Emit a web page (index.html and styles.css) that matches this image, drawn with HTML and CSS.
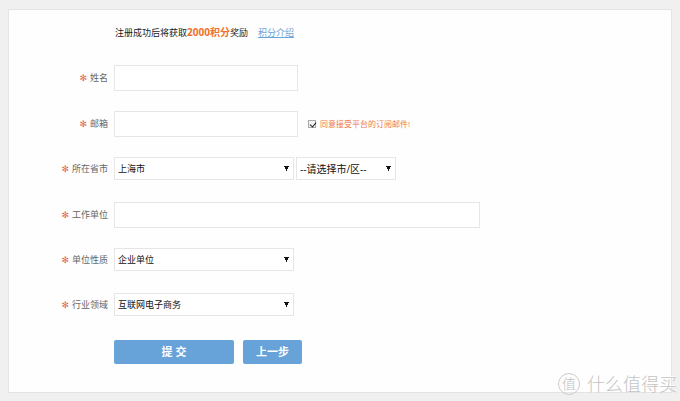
FILE: index.html
```
<!DOCTYPE html>
<html lang="zh-CN">
<head>
  <meta charset="utf-8">
  <title>注册</title>
  <link rel="stylesheet" href="styles.css">
</head>
<body>
  <form class="panel">
    <p class="notice">注册成功后将获取<strong>2000积分</strong>奖励<a href="#">积分介绍</a></p>

    <div class="row">
      <label class="label" for="name"><i>✻</i>姓名</label>
      <input type="text" id="name" class="text-input">
    </div>
    <div class="row">
      <label class="label" for="email"><i>✻</i>邮箱</label>
      <input type="text" id="email" class="text-input">
      <label class="subscribe"><input type="checkbox" checked><span>同意接受平台的订阅邮件!</span></label>
    </div>
    <div class="row row-select">
      <label class="label" for="province"><i>✻</i>所在省市</label>
      <select id="province" class="select"><option>上海市</option></select>
      <select class="select select-city" aria-label="市/区"><option>--请选择市/区--</option></select>
    </div>
    <div class="row">
      <label class="label" for="company"><i>✻</i>工作单位</label>
      <input type="text" id="company" class="text-input text-input-wide">
    </div>
    <div class="row row-select">
      <label class="label" for="nature"><i>✻</i>单位性质</label>
      <select id="nature" class="select"><option>企业单位</option></select>
    </div>
    <div class="row row-select">
      <label class="label" for="industry"><i>✻</i>行业领域</label>
      <select id="industry" class="select"><option>互联网电子商务</option></select>
    </div>

    <div class="actions">
      <button type="submit" class="btn btn-submit">提 交</button>
      <button type="button" class="btn">上一步</button>
    </div>
  </form>

  <div class="watermark"><span class="watermark-logo">值</span>什么值得买</div>
</body>
</html>
```
FILE: styles.css
```
* { box-sizing: border-box; }

body {
  margin: 0;
  padding: 9px 8px;
  background-color: #f0f0f0;
  color: #222;
  font-family: "Open Sans", "Noto Sans CJK SC", sans-serif;
  font-size: 9px;
  line-height: 14px;
}

.panel {
  padding: 15px 0 28px;
  background-color: #fefefe;
  border: 1px solid #e4e4e4;
}

.notice { margin: 0 0 25px 106px; }
.notice strong { color: #f0702c; font-size: 10px; }
.notice a { margin-left: 10px; color: #6ba3d6; }

/* Form rows */
.row {
  display: flex;
  align-items: center;
  height: 26px;
  margin-bottom: 20px;
}
.row-select { height: 23px; margin-bottom: 22px; }

.label {
  width: 99px;
  margin-right: 6px;
  color: #666;
  text-align: right;
}
.label i {
  margin-right: 3px;
  color: #e0605c;
  font-family: "DejaVu Sans", sans-serif;
  font-style: normal;
}

.text-input {
  width: 184px;
  height: 26px;
  padding: 0 4px;
  border: 1px solid #e6e6e6;
  background-color: #fff;
  font: inherit;
}
.text-input-wide { width: 366px; }

.select {
  width: 180px;
  height: 23px;
  margin-right: 2px;
  padding: 0 3px;
  border: 1px solid #e6e6e6;
  border-radius: 0;
  color: #111;
  font: inherit;
  appearance: none;
  /* small triangle arrow, two gradients meeting at the tip */
  background:
    linear-gradient(to bottom right, #111 50%, transparent 50%) right 4px center / 3px 6px no-repeat,
    linear-gradient(to bottom left, #111 50%, transparent 50%) right 6px center / 3px 6px no-repeat,
    #fff;
}
.select-city { width: 100px; font-size: 10px; }

.subscribe {
  display: flex;
  align-items: center;
  gap: 4px;
  margin-left: 10px;
  color: #ee7a48;
  font-size: 8px;
}
.subscribe input {
  position: relative;
  width: 8px;
  height: 8px;
  margin: 0;
  border: 1px solid #aaa;
  background-color: #f4f4f4;
  appearance: none;
}
.subscribe input:checked::after {
  content: "";
  position: absolute;
  top: 0;
  left: 2px;
  width: 3px;
  height: 5px;
  border: solid #222;
  border-width: 0 1px 1px 0;
  transform: rotate(40deg);
}

/* Buttons */
.actions {
  display: flex;
  gap: 9px;
  margin: 24px 0 0 105px;
}
.btn {
  width: 59px;
  height: 24px;
  padding: 0;
  border: none;
  border-radius: 2px;
  background-color: #67a2d8;
  color: #fff;
  font: inherit;
  font-size: 11px;
  font-weight: bold;
}
.btn-submit { width: 120px; }

/* Site mark over the page corner */
.watermark {
  position: absolute;
  right: 3px;
  bottom: 6px;
  display: flex;
  align-items: center;
  gap: 7px;
  color: #c4c4c4;
  font-size: 18px;
  font-weight: 300;
  line-height: 22px;
  text-shadow: -1px -1px 0 #fff;
}
.watermark-logo {
  width: 22px;
  height: 22px;
  border: 1px solid #ccc;
  border-radius: 50%;
  font-size: 14px;
  line-height: 20px;
  text-align: center;
}
```
